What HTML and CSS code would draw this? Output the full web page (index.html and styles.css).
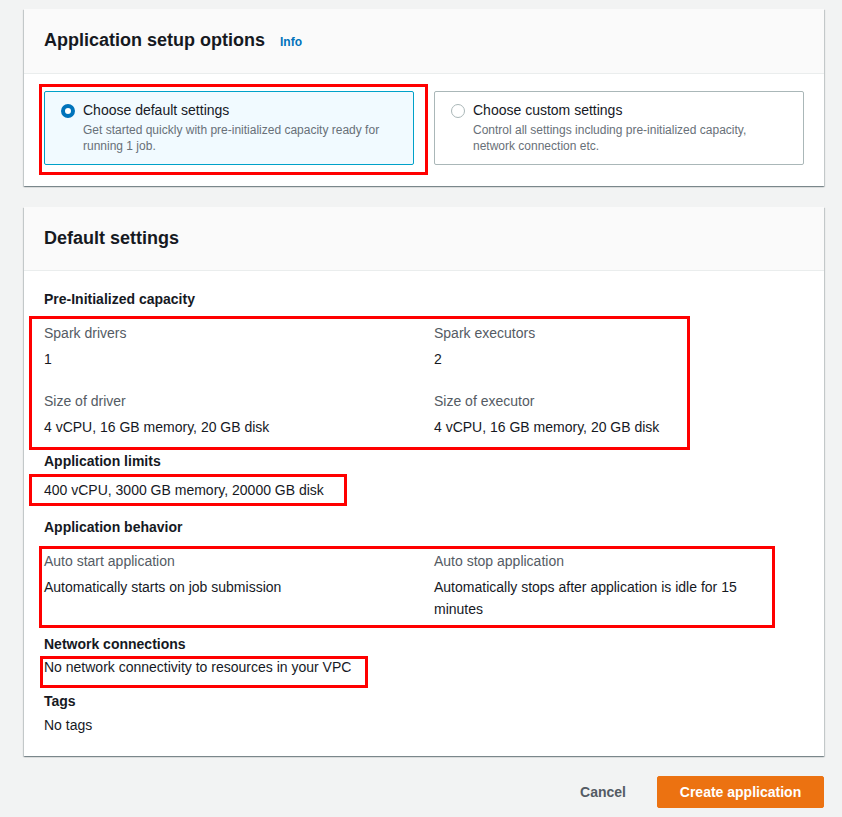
FILE: index.html
```html
<!DOCTYPE html>
<html>
<head>
<meta charset="utf-8">
<link rel="stylesheet" href="styles.css">
</head>
<body>
<div class="page">
  <section class="card card-setup">
    <div class="card-header">
      <h2 class="card-title">Application setup options</h2>
      <a class="info">Info</a>
    </div>
    <div class="card-body setup-body">
      <div class="tiles">
        <div class="tile tile-selected hl hl-radio">
          <span class="radio radio-on"></span>
          <div class="tile-text">
            <div class="tile-title">Choose default settings</div>
            <div class="tile-desc">Get started quickly with pre-initialized capacity ready for running 1 job.</div>
          </div>
        </div>
        <div class="tile">
          <span class="radio"></span>
          <div class="tile-text">
            <div class="tile-title">Choose custom settings</div>
            <div class="tile-desc">Control all settings including pre-initialized capacity, network connection etc.</div>
          </div>
        </div>
      </div>
    </div>
  </section>

  <section class="card card-default">
    <div class="card-header">
      <h2 class="card-title">Default settings</h2>
    </div>
    <div class="card-body settings-body">
      <h3 class="sec">Pre-Initialized capacity</h3>
      <div class="grid grid-cap hl hl-cap">
        <div class="kv">
          <div class="label">Spark drivers</div>
          <div class="value">1</div>
        </div>
        <div class="kv">
          <div class="label">Spark executors</div>
          <div class="value">2</div>
        </div>
        <div class="kv kv-2">
          <div class="label">Size of driver</div>
          <div class="value">4 vCPU, 16 GB memory, 20 GB disk</div>
        </div>
        <div class="kv kv-2">
          <div class="label">Size of executor</div>
          <div class="value">4 vCPU, 16 GB memory, 20 GB disk</div>
        </div>
      </div>

      <h3 class="sec sec-limits">Application limits</h3>
      <div class="value value-limits hl hl-limits">400 vCPU, 3000 GB memory, 20000 GB disk</div>

      <h3 class="sec sec-behavior">Application behavior</h3>
      <div class="grid grid-beh hl hl-beh">
        <div class="kv">
          <div class="label">Auto start application</div>
          <div class="value value-beh">Automatically starts on job submission</div>
        </div>
        <div class="kv">
          <div class="label">Auto stop application</div>
          <div class="value value-beh">Automatically stops after application is idle for 15 minutes</div>
        </div>
      </div>

      <h3 class="sec sec-net">Network connections</h3>
      <div class="value value-net hl hl-net">No network connectivity to resources in your VPC</div>

      <h3 class="sec sec-tags">Tags</h3>
      <div class="value value-tags">No tags</div>
    </div>
  </section>

  <div class="actions">
    <button class="btn btn-link">Cancel</button>
    <button class="btn btn-primary">Create application</button>
  </div>
</div>
</body>
</html>
```
FILE: styles.css
```css
*, *::before, *::after { box-sizing: border-box; }
html, body { margin: 0; padding: 0; }
body {
  background: #f2f3f3;
  font-family: "Liberation Sans", Arial, sans-serif;
  font-size: 14px;
  line-height: 20px;
  color: #16191f;
}
.page {
  padding: 9px 18px 0 24px;
}
.card {
  background: #fff;
  box-shadow: 0 1px 1px 0 rgba(0,28,36,0.3), 1px 1px 1px 0 rgba(0,28,36,0.15), -1px 1px 1px 0 rgba(0,28,36,0.15);
}
.card-setup { margin-bottom: 21px; }
.card-default { margin-bottom: 20px; }
.card-header {
  background: #fafafa;
  border-bottom: 1px solid #eaeded;
  padding: 20px 20px 21px;
  display: flex;
  align-items: baseline;
}
.card-title {
  margin: 0;
  font-size: 18px;
  line-height: 22px;
  font-weight: 700;
  color: #16191f;
}
.info {
  margin-left: 15px;
  font-size: 12px;
  font-weight: 700;
  color: #0073bb;
}
.setup-body {
  padding: 17px 20px 21px;
}
.tiles {
  display: grid;
  grid-template-columns: 1fr 1fr;
  gap: 20px;
}
.tile {
  border: 1px solid #aab7b8;
  border-radius: 2px;
  padding: 8px 16px 11px;
  display: flex;
  align-items: flex-start;
  height: 74px;
}
.tile-selected {
  background: #f1faff;
  border-color: #00a1c9;
}
.radio {
  flex: none;
  width: 14px;
  height: 14px;
  border-radius: 50%;
  border: 1px solid #aab7b8;
  background: #fff;
  margin-top: 4px;
  margin-right: 8px;
}
.radio-on {
  border: 4px solid #0073bb;
}
.tile-title {
  font-size: 14px;
  line-height: 20px;
  color: #16191f;
}
.tile-desc {
  font-size: 12px;
  line-height: 16px;
  color: #687078;
  margin-top: 2px;
}
.settings-body {
  padding: 18px 20px 21px;
}
.sec {
  margin: 0;
  font-size: 14px;
  line-height: 20px;
  font-weight: 700;
  color: #16191f;
}
.grid {
  display: grid;
  grid-template-columns: 370px 370px;
  column-gap: 20px;
}
.grid-cap { margin-top: 14px; }
.kv-2 { margin-top: 22px; }
.label { color: #545b64; }
.value { color: #16191f; margin-top: 6px; }
.sec-limits { margin-top: 14px; }
.value-limits { margin-top: 9px; }
.sec-behavior { margin-top: 17px; }
.grid-beh { margin-top: 14px; }
.value-beh { line-height: 22px; margin-top: 5px; max-width: 340px; }
.sec-net { margin-top: 14px; }
.value-net { margin-top: 3px; }
.sec-tags { margin-top: 14px; }
.value-tags { margin-top: 4px; }

.hl { position: relative; }
.hl::after {
  content: "";
  position: absolute;
  border: 3px solid #ff0000;
  pointer-events: none;
}
.hl-radio::after { left: -6px; top: -8px; width: 389px; height: 91px; }
.hl-cap::after { left: -15px; top: -7px; width: 661px; height: 134px; }
.hl-limits::after { left: -15px; top: -6px; width: 318px; height: 32px; }
.hl-beh::after { left: -5px; top: -5px; width: 736px; height: 82px; }
.hl-net::after { left: -4px; top: -1px; width: 328px; height: 32px; }

.actions {
  display: flex;
  justify-content: flex-end;
  align-items: center;
  gap: 10px;
}
.btn {
  font-family: inherit;
  font-size: 14px;
  font-weight: 700;
  line-height: 20px;
  border-radius: 2px;
  cursor: pointer;
}
.btn-link {
  background: none;
  border: 1px solid transparent;
  color: #545b64;
  padding: 5px 20px;
}
.btn-primary {
  background: #ec7211;
  border: 1px solid #ec7211;
  color: #fff;
  padding: 5px 20px;
  width: 167px;
}
```
